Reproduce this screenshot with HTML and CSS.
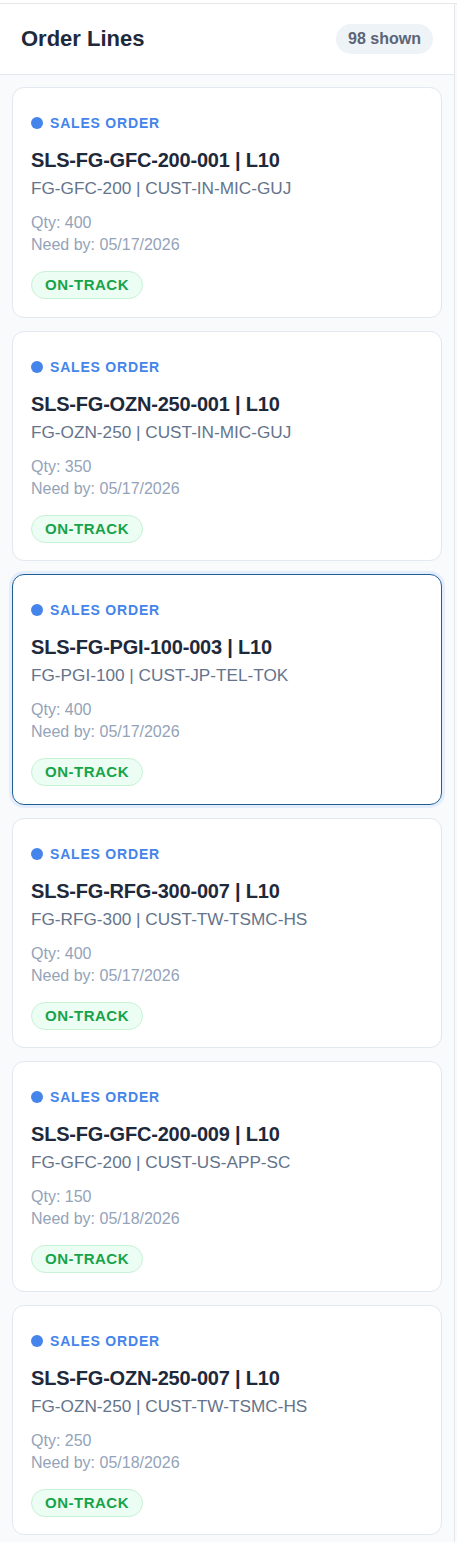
FILE: index.html
```html
<!DOCTYPE html>
<html lang="en">
<head>
<meta charset="utf-8">
<title>Order Lines</title>
<link rel="stylesheet" href="styles.css">
</head>
<body>
<div class="page">
  <section class="panel">
    <header class="panel-head">
      <h2 class="panel-title">Order Lines</h2>
      <span class="count">98 shown</span>
    </header>
    <div class="list">
      <article class="card">
        <div class="type"><span class="dot"></span>SALES ORDER</div>
        <div class="title">SLS-FG-GFC-200-001 | L10</div>
        <div class="sub">FG-GFC-200 | CUST-IN-MIC-GUJ</div>
        <div class="meta">Qty: 400</div>
        <div class="meta">Need by: 05/17/2026</div>
        <span class="status">ON-TRACK</span>
      </article>
      <article class="card">
        <div class="type"><span class="dot"></span>SALES ORDER</div>
        <div class="title">SLS-FG-OZN-250-001 | L10</div>
        <div class="sub">FG-OZN-250 | CUST-IN-MIC-GUJ</div>
        <div class="meta">Qty: 350</div>
        <div class="meta">Need by: 05/17/2026</div>
        <span class="status">ON-TRACK</span>
      </article>
      <article class="card selected">
        <div class="type"><span class="dot"></span>SALES ORDER</div>
        <div class="title">SLS-FG-PGI-100-003 | L10</div>
        <div class="sub">FG-PGI-100 | CUST-JP-TEL-TOK</div>
        <div class="meta">Qty: 400</div>
        <div class="meta">Need by: 05/17/2026</div>
        <span class="status">ON-TRACK</span>
      </article>
      <article class="card">
        <div class="type"><span class="dot"></span>SALES ORDER</div>
        <div class="title">SLS-FG-RFG-300-007 | L10</div>
        <div class="sub">FG-RFG-300 | CUST-TW-TSMC-HS</div>
        <div class="meta">Qty: 400</div>
        <div class="meta">Need by: 05/17/2026</div>
        <span class="status">ON-TRACK</span>
      </article>
      <article class="card">
        <div class="type"><span class="dot"></span>SALES ORDER</div>
        <div class="title">SLS-FG-GFC-200-009 | L10</div>
        <div class="sub">FG-GFC-200 | CUST-US-APP-SC</div>
        <div class="meta">Qty: 150</div>
        <div class="meta">Need by: 05/18/2026</div>
        <span class="status">ON-TRACK</span>
      </article>
      <article class="card">
        <div class="type"><span class="dot"></span>SALES ORDER</div>
        <div class="title">SLS-FG-OZN-250-007 | L10</div>
        <div class="sub">FG-OZN-250 | CUST-TW-TSMC-HS</div>
        <div class="meta">Qty: 250</div>
        <div class="meta">Need by: 05/18/2026</div>
        <span class="status">ON-TRACK</span>
      </article>
    </div>
  </section>
  <div class="side"></div>
</div>
</body>
</html>
```
FILE: styles.css
```css
* { box-sizing: border-box; }
html, body { margin: 0; padding: 0; }
body {
  background: #ffffff;
  font-family: "Liberation Sans", Arial, Helvetica, sans-serif;
  color: #1e293b;
}
.page {
  display: flex;
  padding-top: 3px;
  min-height: 1542px;
}
.panel {
  width: 455px;
  flex: none;
  border-top: 1px solid #e5e7eb;
  border-right: 1px solid #e5e7eb;
  background: #f8fafc;
  display: flex;
  flex-direction: column;
}
.side {
  flex: 1;
  border-top: 1px solid #e5e7eb;
  background: #f8fafc;
}
.panel-head {
  height: 71px;
  display: flex;
  align-items: center;
  justify-content: space-between;
  padding: 0 21px 0 21px;
  background: #ffffff;
  border-bottom: 1px solid #e2e8f0;
}
.panel-title {
  margin: 0;
  font-size: 22px;
  font-weight: 700;
  color: #1e293b;
  line-height: 28px;
}
.count {
  height: 30px;
  line-height: 30px;
  padding: 0 12px;
  border-radius: 15px;
  background: #eef3f8;
  color: #5b6576;
  font-size: 16px;
  font-weight: 700;
}
.list {
  padding: 12px 12px;
  display: flex;
  flex-direction: column;
  gap: 13px;
}
.card {
  background: #ffffff;
  border: 1px solid #e2e8f0;
  border-radius: 12px;
  padding: 25px 18px 17.5px 18px;
  display: flex;
  flex-direction: column;
  align-items: flex-start;
}
.card.selected {
  border-color: #1f5f92;
  box-shadow: 0 0 0 3px rgba(59, 130, 246, 0.10);
}
.type {
  display: flex;
  align-items: center;
  gap: 7px;
  font-size: 14px;
  line-height: 20px;
  font-weight: 700;
  letter-spacing: 0.8px;
  color: #4584ea;
}
.dot {
  width: 12px;
  height: 12px;
  border-radius: 50%;
  background: #4584ea;
}
.title {
  margin-top: 14px;
  font-size: 20px;
  line-height: 26px;
  font-weight: 700;
  letter-spacing: -0.2px;
  color: #1e293b;
}
.sub {
  margin-top: 3px;
  font-size: 17.2px;
  line-height: 24px;
  color: #64748b;
  margin-bottom: 12px;
}
.meta {
  font-size: 16px;
  line-height: 22px;
  color: #94a3b8;
}
.status {
  margin-top: 15px;
  height: 28px;
  line-height: 26px;
  padding: 0 13px;
  border: 1px solid #c7f2d6;
  border-radius: 14px;
  background: #ecfdf3;
  color: #16a34a;
  font-size: 15px;
  font-weight: 700;
  letter-spacing: 0.5px;
}
```
